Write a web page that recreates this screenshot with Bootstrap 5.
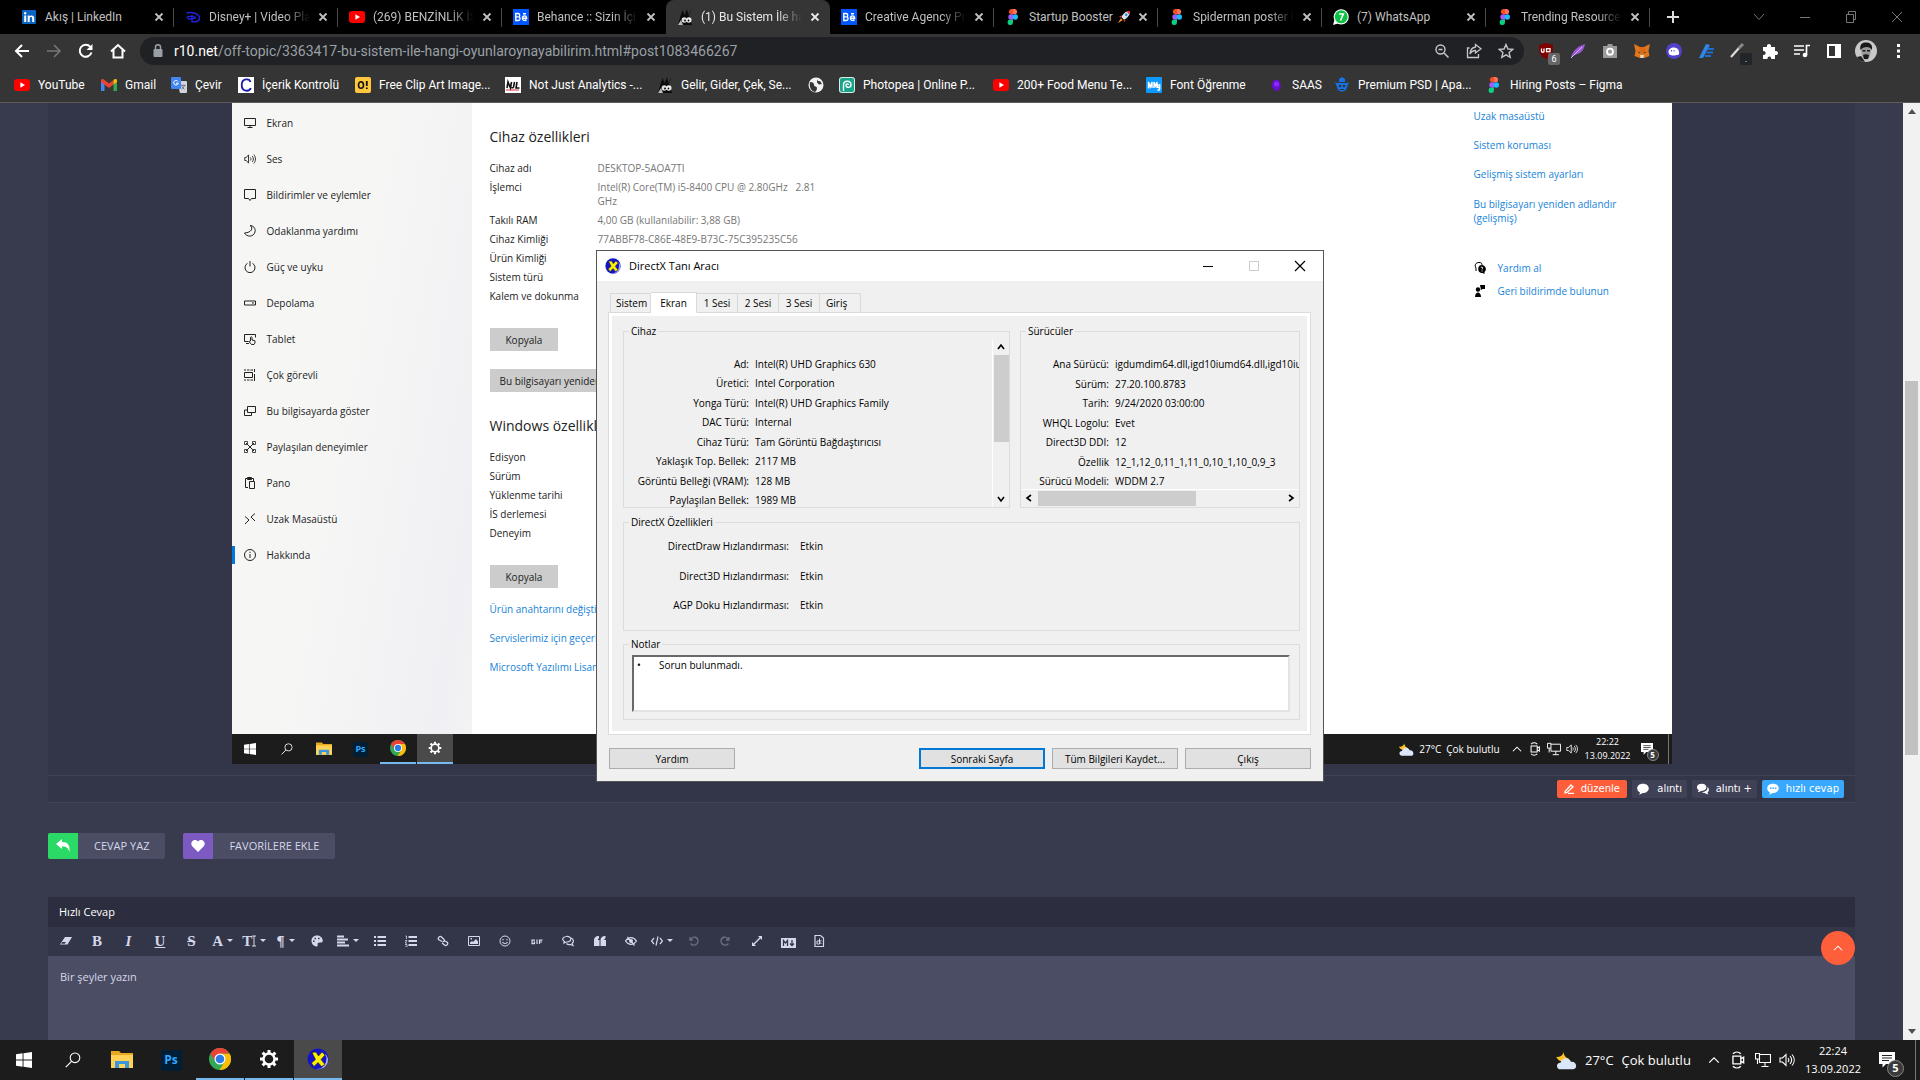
<!DOCTYPE html>
<html lang="tr">
<head>
<meta charset="utf-8">
<meta name="viewport" content="width=device-width, initial-scale=1">
<title>Bu Sistem İle hangi oyunları oynayabilirim</title>
<link rel="stylesheet" href="https://cdn.jsdelivr.net/npm/bootstrap@5.3.0/dist/css/bootstrap.min.css">
<style>
:root{--ui:"Roboto","Liberation Sans",sans-serif;--win:"Open Sans","Noto Sans",sans-serif}
body{font-family:var(--win);font-size:11px;line-height:16px;background:#383a4e;color:#fff}
button{font-family:inherit;color:inherit;background:none;border:0;padding:0}
a{color:inherit;text-decoration:none}
svg{display:block;flex:none}
.i10{width:10px;height:10px}.i12{width:12px;height:12px}.i14{width:14px;height:14px}.i16{width:16px;height:16px}.i18{width:18px;height:18px}.i20{width:20px;height:20px}
.ln{fill:none;stroke:currentColor}

/* browser chrome */
.browser{font-family:var(--ui);font-size:12px;border-bottom:1px solid #5c5c5a;background:#353535}
.tabstrip{background:#000;height:34px;padding-left:10px;color:#c0c0c0}
.btab{width:164px;padding:0 10px 0 11px;gap:8px;position:relative}
.btab::after{content:"";position:absolute;right:0;top:8px;height:19px;width:1px;background:#4a4a4a}
.btab.on{background:#353535;border-radius:8px 8px 0 0;color:#e8e8e8}
.btab.on::after,.btab.quiet::after{display:none}
.btab a{flex:1;min-width:0;overflow:hidden;white-space:nowrap}
.btab a.fades{-webkit-mask-image:linear-gradient(90deg,#000 75%,transparent);mask-image:linear-gradient(90deg,#000 75%,transparent)}
.winbtns{color:#777}
.winbtns button{width:46px}
.toolrow{height:34px;padding:0 6px;color:#fff}
.toolrow>.tb{width:32px}
.omni{height:28px;background:#202124;border-radius:14px;flex:1;font-size:14px;margin:0 6px;padding:0 2px 0 10px;color:#9aa0a6}
.omni input{background:none;border:0;outline:0;color:transparent;width:1px;padding:0}
.omni .tb{width:32px;color:#c4c7c9}
.omni b{font-weight:400;color:#fff}
.extnum{position:absolute;left:18px;top:10px;width:12px;height:12px;border-radius:2px;background:#666;font-size:9px;line-height:12px;text-align:center}
.marks{height:34px;padding:0 14px;display:grid;grid-template-columns:87px 70px 67px 117px 150px 152px 151px 31px 154px 153px 122px 66px 152px 160px;align-items:center}
.marks a{display:flex;gap:8px;align-items:center;white-space:nowrap}

/* forum page */
.desk{min-height:0}
.page{flex:1;min-width:0;padding:0 48px;overflow:hidden}
.panelbox{background:#333549;border-bottom:1px solid #404259}
.postfoot{height:27px;border-top:1px solid #404259;padding:0 11px;gap:5px;margin-top:11px}
.pbtn{height:18px;border-radius:2px;background:#3f4157;font:10px/18px "DejaVu Sans",sans-serif;padding:0 5px;display:flex;align-items:center;justify-content:space-between}
.pbtn.w70{width:70px;padding:0 7px}.pbtn.w55{width:55px}.pbtn.w65{width:65px}.pbtn.w82{width:82px}
.orange{background:#ff5e3a}.sky{background:#38a9ff}
.acts{margin:30px 0 38px;gap:18px}
.act{height:26px;display:flex;align-items:center;background:#4b4d64;border-radius:2px;overflow:hidden;color:#d5d7ea;padding:0 16px 0 0;gap:16px}
.act span{width:30px;height:26px;color:#fff;display:flex;align-items:center;justify-content:center}
.green{background:#2bd967}.violet{background:#7c5ac2}
.edhead{background:#2c2d3e;height:30px;padding:0 11px;line-height:30px;font-size:11px;font-weight:400}
.edbar{background:#333549;height:29px;padding:0 0 2px 2px;color:#d5d7ea}
.edbar .set{width:785px;display:flex}
.edbar button{flex:1 1 0;display:flex;align-items:center;justify-content:center;font:700 15px/20px "Liberation Serif",serif}
.edbar .caret{border:3px solid transparent;border-top-color:currentColor;border-bottom:0;margin-left:4px}
.edbar .off{color:#6b6d84}
.reply{background:#4b4d64;border:0;width:100%;padding:13px 12px;color:#d5d7ea;resize:none;outline:0;display:block;height:130px;overflow:hidden}
.reply::placeholder{color:#d5d7ea;opacity:1}
.totop{position:absolute;right:65px;bottom:115px;width:34px;height:34px;border-radius:50%;background:#ff5e3a;display:flex;align-items:center;justify-content:center}
.vbar{width:17px;background:#f1f1f1;padding:6px 2px;display:flex;flex-direction:column;align-items:center}
.vbar i{display:block;background:#c1c1c1;width:13px;flex:370 1 0}
.vbar .before{flex:265 1 0}.vbar .after{flex:272 1 0}
.up,.down{width:0;height:0;border:4px solid transparent}
.up{border-top:0;border-bottom:5px solid #505050}.down{border-bottom:0;border-top:5px solid #505050}

/* posted desktop capture */
.shot{width:1440px;max-width:100%;margin:0 auto;font-size:10px;line-height:14px;background:#fff;color:#222}
.shotbody{height:631px}
.side{width:240px;background:linear-gradient(100deg,#f6f6f5 45%,#f0f0f4 90%,#f3f3f4);padding-top:2px}
.side a{height:36px;display:flex;align-items:center;gap:11px;padding-left:9px;border-left:3px solid transparent;position:relative}
.side a.cur::before{content:"";position:absolute;left:-3px;top:9px;width:3px;height:18px;background:#0078d7}
.info{padding:24px 18px 0;width:300px}
.info h2{font-size:14px;line-height:20px;font-weight:400;margin:0;white-space:nowrap}
.specs{display:grid;grid-template-columns:108px 1fr;row-gap:5px;margin:0 0 25px;padding-top:14px}
.specs dt{font-weight:400;white-space:nowrap}.specs dd{margin:0;color:#767676;white-space:pre}
.gbtn{background:#ccc;height:23px;padding:0 16px;display:block;white-space:nowrap;color:#222}
.gbtn.copy{margin-bottom:18px}
.gbtn.wide{padding:0 10px}
.lnk{color:#1683d8}
.info .lnk{display:block;height:29px;white-space:nowrap}
.info .links{margin-top:-4px}
.related{width:198px;padding-top:6px}
.related>a{display:block;margin-bottom:15px}
.related>a.last{margin:0 0 36px;padding-top:1px}
.related .withico{display:flex;align-items:center;gap:12px;margin-bottom:9px;height:14px}

/* taskbars */
.tbar{background:#1c1c1c;color:#fff;display:flex;justify-content:space-between;flex-shrink:0}
.apps{display:flex;gap:1px}
.apps button{display:flex;align-items:center;justify-content:center;border-bottom:0 solid #76b9ed}
.apps .lit{background:#4a4a4a}
.pslogo{background:#001e36;color:#31a8ff;border-radius:3px;font-weight:700;text-align:center}
.tray{display:flex;align-items:center}
.clock{text-align:center}
.noti{position:relative}
.noti b{position:absolute;border-radius:50%;background:#3a3a3a;border:1px solid #888;text-align:center}
.edge{border-left:1px solid #777;align-self:stretch}
.small-t{height:30px;font-size:10px}
.small-t .apps button{width:36px}
.small-t .run{border-bottom-width:2px}
.small-t .pslogo{width:15px;height:15px;font-size:9px;line-height:14px}
.small-t .tray{gap:5px}
.small-t .sky-txt{margin-right:6px}
.small-t .clock{font-size:9px;line-height:14px;margin:0 5px 0 2px}
.small-t .noti b{width:12px;height:12px;left:6px;top:6px;font-size:8px;line-height:10px}
.small-t .edge{width:4px;margin-left:10px}
.big-t{height:40px;font-size:13px}
.big-t .apps button{width:48px}
.big-t .run{border-bottom-width:2px}
.big-t .pslogo{width:21px;height:21px;font-size:12px;line-height:20px}
.big-t .tray{gap:8px}
.big-t .sky-txt{margin-right:8px}
.big-t .clock{font-size:11px;line-height:18px;margin:0 10px 0 2px}
.big-t .noti b{width:17px;height:17px;left:8px;top:8px;font-size:11px;line-height:14px}
.big-t .edge{width:5px;margin-left:12px}

/* DirectX window */
.dx{position:absolute;left:596px;top:250px;width:728px;background:#f0f0f0;border:1px solid #555;color:#000;font-size:10px}
.dxtitle{height:30px;background:#fff;font-size:11px;padding-left:8px;display:flex;align-items:center}
.dxtitle button{width:46px;height:30px;display:flex;justify-content:center;align-items:center}
.dxbody{padding:11px 12px 12px 11px}
.dxtabs{display:flex;align-items:flex-end;height:21px;margin:0 0 -1px 2px;position:relative}
.dxtabs button{height:20px;border:1px solid #d9d9d9;border-left-width:0;padding:0 6px;width:41px;white-space:nowrap}
.dxtabs button:first-child{border-left-width:1px;padding:0 5px}
.dxtabs button.on{background:#fff;height:21px;width:46px;border-bottom-color:#fff}
.dxpane{border:1px solid #dcdcdc;outline:3px solid #fff;outline-offset:-4px;padding:10px 10px 14px 14px}
.dx fieldset{border:1px solid #dcdcdc;min-width:0;margin:0;padding:0}
.dx legend{float:none;width:auto;font-size:10px;line-height:16px;margin:0 0 0 5px;padding:0 2px}
.kv{display:flex;flex-direction:column;justify-content:space-between;margin:0}
.kv div{display:flex;gap:6px;white-space:nowrap;line-height:16px}
.kv dt{font-weight:400;text-align:right;flex:none}.kv dd{margin:0}
.gA{width:387px}.gB{flex:1}
.gA .view{height:168px;display:flex;overflow:hidden}
.gA .kv{height:169px;padding-top:17px;flex:1}.gA dt{width:125px}
.gB .kv{height:150px;padding-top:17px;overflow:hidden}.gB dt{width:88px}
.sbv{width:17px;display:flex;flex-direction:column;align-items:center;border-left:1px solid #fff;padding:4px 0}
.sbv i{background:#cdcdcd;width:15px;height:87px;margin:4px 0 auto}
.sbh{height:17px;display:flex;align-items:center;border-top:1px solid #fff;padding:0 4px}
.sbh i{background:#cdcdcd;height:15px;width:158px;margin:0 auto 0 5px}
.dx .gC{height:117px;margin:6px 0 5px}
.gC .kv{height:75px;margin-top:8px}.gC dt{width:165px}.gC .kv div{gap:11px}
.gD{height:84px}
.notes{display:block;width:658px;height:57px;margin:3px 0 0 8px;border:2px solid;border-color:#696969 #e3e3e3 #e3e3e3 #696969;background:#fff;resize:none;padding:0 3px;font-size:10px;line-height:16px;overflow:hidden;outline:0;color:#000}
.dxfoot{display:flex;gap:7px;margin:13px 0 0 1px}
.dxfoot button{width:126px;height:21px;background:#e1e1e1;border:1px solid #adadad}
.dxfoot .def{border:2px solid #0078d7}
</style>
<script src="https://cdn.jsdelivr.net/npm/bootstrap@5.3.0/dist/js/bootstrap.bundle.min.js"></script>
</head>
<body class="d-flex flex-column vh-100 overflow-hidden position-relative">
<svg width="0" height="0" class="position-absolute" aria-hidden="true"><defs>
<symbol id="x" viewBox="0 0 10 10"><path d="M1.5 1.5l7 7m0-7l-7 7" stroke="currentColor" stroke-width="1.8" fill="none"/></symbol>
<symbol id="yt" viewBox="0 0 16 16"><rect y="2" width="16" height="12" rx="3" fill="red"/><path d="M6.4 5.3v5.4L11 8z" fill="#fff"/></symbol>
<symbol id="li" viewBox="0 0 16 16"><rect x="1" y="1" width="14" height="14" rx="1" fill="#0a66c2"/><path d="M3.200 6.500h2v6.500h-2zM4.200 3a1.200 1.200 0 110 2.400 1.200 1.200 0 010-2.400zM6.700 6.500h1.900v.9c.9-1.500 4.600-1.600 4.600 1.600v4h-2V9.500c0-2-2.500-1.800-2.500 0V13h-2z" fill="#fff"/></symbol>
<symbol id="dis" viewBox="0 0 16 16"><path d="M1.500 4C7 2.500 14 4.500 14.500 9c.2 3.600-5 4.500-8 3.500M7 6v7.500M1.500 8.500c2-1.800 8-1.300 9 0-.5 1.300-6 2-8 .8" fill="none" stroke="#2222e0" stroke-width="1.400"/></symbol>
<symbol id="be" viewBox="0 0 16 16"><rect width="16" height="16" fill="#0057ff"/><path d="M2.800 4.500v7h2.400c2.400 0 2.400-3.300.4-3.600C7.300 7.500 7 4.500 5 4.500zM2.800 7.900h2.500M13.500 10.500c-1.200 1.700-4.200 1.200-4.100-1.400.2-3 4.200-3 4.200.2H9.500M10 4.800h3" stroke="#fff" stroke-width="1.400" fill="none"/></symbol>
<symbol id="r10" viewBox="0 0 16 16"><path d="M3.500 7L5.500 1l2 5 2.500-5.500 2 6.500 3 9H1z" fill="#0b0b0b"/><path d="M7.500 6l2.500-5.500M12 6l2-5" stroke="#222" fill="none"/><circle cx="7.300" cy="11" r="2.700" fill="#ddd"/><circle cx="11.800" cy="11" r="2.700" fill="#eee"/><circle cx="8" cy="11.500" r=".9"/><circle cx="11.500" cy="11.500" r=".9"/><path d="M1 16l3-5 2 5z" fill="#bbb"/></symbol>
<symbol id="fig" viewBox="0 0 16 16"><path d="M8 0H6a2.700 2.700 0 000 5.300h2z" fill="#f24e1e"/><path d="M8 0h2a2.700 2.700 0 010 5.300H8z" fill="#ff7262"/><path d="M8 5.300H6a2.700 2.700 0 000 5.400h2z" fill="#a259ff"/><circle cx="10.300" cy="8" r="2.700" fill="#1abcfe"/><path d="M8 10.700H6A2.700 2.700 0 108 13.300z" fill="#0acf83"/></symbol>
<symbol id="wa" viewBox="0 0 16 16"><circle cx="8.200" cy="7.800" r="7.600" fill="#fff"/><path d="M0 16l1.500-5L5 14.500z" fill="#fff"/><circle cx="8.200" cy="7.800" r="6.500" fill="#0dc143"/><path d="M6 5h4.300L7.500 11.500" stroke="#fff" stroke-width="1.600" fill="none"/></symbol>
<symbol id="rocket" viewBox="0 0 16 16"><path d="M15 1c-5 0-8 3-10 7l3 3c4-2 7-5 7-10z" fill="#d9e4ee"/><path d="M15 1c-2 0-3 .3-4 .9L14 5c.7-1 1-2 1-4zM5 6L2 8l3 .5zM10 11l-2 3-.5-3z" fill="#d33"/><circle cx="10.500" cy="5.500" r="1.500" fill="#2b8fd6"/><path d="M4.500 9.500L1 15l5.500-3.500z" fill="#ff9c1a"/></symbol>
<symbol id="gm" viewBox="0 0 16 16"><path d="M0 3.500V14h3.500V6.500z" fill="#4285f4"/><path d="M16 3.500V14h-3.500V6.500z" fill="#34a853"/><path d="M0 3.500C0 2 2 1.500 3.500 3L8 6.500 12.500 3v4.500L8 11 0 5z" fill="#ea4335"/><path d="M12.500 3C14 1.500 16 2 16 3.500V5l-3.500 2.500z" fill="#fbbc04"/></symbol>
<symbol id="tr" viewBox="0 0 16 16"><path d="M6 4h9a1 1 0 011 1v10a1 1 0 01-1 1H9z" fill="#d0d4da"/><rect width="10" height="12" rx="1" fill="#4285f4"/><path d="M7 4.500a2.300 2.300 0 10.300 1.700H5" stroke="#fff" fill="none"/><path d="M10 8.300h4.500m-1 0c-.6 2-2 3-3 4m.3-3c.6 1.300 1.700 2.300 2.700 3" stroke="#667" fill="none" stroke-width=".9"/></symbol>
<symbol id="ic" viewBox="0 0 16 16"><rect width="16" height="16" fill="#fff"/><path d="M12.500 5C11.500 1.200 3.700 1 3.700 8s7.800 7 9 3" fill="none" stroke="#1a1aa6" stroke-width="1.800"/></symbol>
<symbol id="oi" viewBox="0 0 16 16"><rect width="16" height="16" rx="2" fill="#ffc83d"/><ellipse cx="6" cy="8" rx="2.500" ry="3.300" fill="none" stroke="#111" stroke-width="1.600"/><path d="M11.800 4v5m0 1.500v1.500" stroke="#111" stroke-width="1.800"/></symbol>
<symbol id="njl" viewBox="0 0 16 16"><rect width="16" height="16" fill="#fff"/><path d="M2 11l1-6 2.500 6 1-6M9.500 5l-1 5c-.3 1-1.500 1-1.700.3M12 5l-1 6h3.500" stroke="#111" stroke-width="1.600" fill="none"/><path d="M1 13h13" stroke="#d33"/></symbol>
<symbol id="globe" viewBox="0 0 16 16"><circle cx="8" cy="8" r="7.500" fill="#f2f2f2"/><path d="M2 5c3 0 4 1 4 3s3 1 3 3-1 3-2 4c-4-1-6-5-5-10zM9 1.500c0 2 1 3 3 2.500l2 3-3 .5-2-2z" fill="#353535"/></symbol>
<symbol id="pp" viewBox="0 0 16 16"><rect width="16" height="16" rx="3" fill="#d9efe9"/><rect x="1" y="1" width="14" height="14" rx="2" fill="#18a487"/><path d="M4.500 14V8c0-5 7.500-5 7.500-.5 0 4-5 3.500-5 .8 0-1.800 2.500-1.800 2.500-.2" fill="none" stroke="#fff" stroke-width="1.400"/></symbol>
<symbol id="mm" viewBox="0 0 16 16"><rect width="16" height="16" rx="1" fill="#0d99ff"/><path d="M2.500 11.500V5l1.700 5L6 5v6M8 11V5l1.500 4L11 5v6M12 7v3c0 1 1.700 1 1.700 0V7v5c0 1.500-1.700 1.500-2 .5" stroke="#fff" stroke-width="1.400" fill="none"/></symbol>
<symbol id="saas" viewBox="0 0 16 16"><path d="M4.500 6c0-4.500 7.500-4.500 7.500 0l1 4-1.500 1v2.500H5.500V11L3.500 10z" fill="#6a0fd0"/><circle cx="8.500" cy="7" r="2.500" fill="#8a2bff"/></symbol>
<symbol id="prem" viewBox="0 0 16 16"><path d="M3 6h10l2-1-2 5c-1 6-9 6-10 0L1 5zM5 2l3-2 3 2v3H5z" fill="#1673e6"/><circle cx="6" cy="9" r="1.300" fill="#353535"/><circle cx="10" cy="9" r="1.300" fill="#353535"/><path d="M6 12.500h4" stroke="#353535"/></symbol>
<symbol id="chev" viewBox="0 0 16 16"><path d="M2.500 11L8 5.500l5.500 5.500" class="ln" stroke-width="1.400"/></symbol>
<symbol id="win" viewBox="0 0 16 16"><path d="M0 2.200L6.600 1.300v6.200H0zM7.500 1.200L16 0v7.500H7.500zM0 8.400h6.600v6.300L0 13.800zM7.500 8.400H16V16l-8.500-1.200z" fill="#fff"/></symbol>
<symbol id="srch" viewBox="0 0 16 16"><circle cx="10" cy="5.800" r="4.800" class="ln" stroke-width="1.100"/><path d="M6.500 9.400L.8 15.200" class="ln" stroke-width="1.200"/></symbol>
<symbol id="fold" viewBox="0 0 22 20"><path d="M0 1h8l2 2h12v15H0z" fill="#e8a91e"/><path d="M0 5h22v13H0z" fill="#ffd257"/><path d="M4 18v-7h14v7h-4v-4H8v4z" fill="#3a96dd"/></symbol>
<symbol id="chr" viewBox="0 0 22 22"><circle cx="11" cy="11" r="11" fill="#34a853"/><path d="M20.500 5.500A11 11 0 0110.500 22l5-8.500L11 5.500z" fill="#fbbc04"/><path d="M1.500 5.500A11 11 0 0110.500 22l5-8.500H6z" fill="#34a853"/><path d="M1.500 5.500a11 11 0 0119 0H11L6 13z" fill="#ea4335"/><circle cx="11" cy="11" r="5.500" fill="#fff"/><circle cx="11" cy="11" r="4.300" fill="#2a7de9"/></symbol>
<symbol id="gear" viewBox="0 0 20 20"><circle cx="10" cy="10" r="5.500" fill="none" stroke="#fff" stroke-width="2.400"/><path d="M10 1v3M10 16v3M1 10h3M16 10h3M3.600 3.600l2.200 2.200M14.200 14.200l2.200 2.200M3.600 16.400l2.200-2.200M14.200 5.800l2.200-2.200" stroke="#fff" stroke-width="3"/></symbol>
<symbol id="dxi" viewBox="0 0 22 22"><circle cx="11" cy="11" r="10.500" fill="#1515c8"/><path d="M18 6a10 10 0 01-9 15c5 1 12-2 12-9 0-2-1-5-3-6z" fill="#a9b4f0"/><path d="M5 4.500l4-.5 2.500 4L15 4l3 3-4 4.500 4 5-3.500 2-3.500-4L7 18.500 4.500 15l4-3.500z" fill="#fff000" stroke="#222" stroke-width=".6"/></symbol>
<symbol id="wx" viewBox="0 0 20 20"><path d="M8 1c-1 3 1 7 5 8-3 4-10 3-12-2 3 1 7-1 7-6z" fill="#ffc328"/><path d="M5 18.500c-4 0-4.500-6 0-6 1-5 8-5.500 9.500-.8 5.500-.7 6.500 6.800 1.500 6.800z" fill="#dbe6f8"/></symbol>
<symbol id="cam" viewBox="0 0 16 16"><path d="M3.500 4.500h7v7h-7zM10.500 7L13 5.500v5L10.500 9M3.500 2.500c2-2 5-2 7 0M3.500 13.500c2 2 5 2 7 0" class="ln" stroke-width="1.200"/></symbol>
<symbol id="mon" viewBox="0 0 16 16"><path d="M4.500 2.500h11v8h-11V7M10 10.500V14m-3.500.5h7M.5 1.500h4V7h-4zM2.500 7v5" class="ln" stroke-width="1.100"/></symbol>
<symbol id="vol" viewBox="0 0 16 16"><path d="M1 6v4h2.500L7 13.500v-11L3.500 6zM9 6c1 1.200 1 2.800 0 4M11 4c2 2.400 2 5.600 0 8M13 2.500c3 3.300 3 7.700 0 11" class="ln" stroke-width="1.100"/></symbol>
<symbol id="note" viewBox="0 0 16 16"><path d="M0 0h16v12H7l-3.500 3.500V12H0z" fill="#fff"/><path d="M3 3.500h10M3 6h10M3 8.500h7" stroke="#222"/></symbol>
<symbol id="bub" viewBox="0 0 16 16"><path d="M8 1C-1.500 1-1.500 10.500 4 12.500 4 14 3 15 1.500 15.500c2.500 0 4-1 5-2C18.500 14 18.500 1 8 1z" fill="currentColor"/></symbol>
</defs></svg>

<header class="browser flex-shrink-0">
 <nav class="tabstrip d-flex align-items-stretch" aria-label="Sekmeler">
  <div class="btab d-flex align-items-center"><svg class="i16"><use href="#li"/></svg><a href="#">Akış | LinkedIn</a><button aria-label="Kapat"><svg class="i10"><use href="#x"/></svg></button></div>
  <div class="btab d-flex align-items-center"><svg class="i16"><use href="#dis"/></svg><a href="#" class="fades">Disney+ | Video Pla</a><button aria-label="Kapat"><svg class="i10"><use href="#x"/></svg></button></div>
  <div class="btab d-flex align-items-center"><svg class="i16"><use href="#yt"/></svg><a href="#" class="fades">(269) BENZİNLİK İŞ</a><button aria-label="Kapat"><svg class="i10"><use href="#x"/></svg></button></div>
  <div class="btab quiet d-flex align-items-center"><svg class="i16"><use href="#be"/></svg><a href="#" class="fades">Behance :: Sizin İçi</a><button aria-label="Kapat"><svg class="i10"><use href="#x"/></svg></button></div>
  <div class="btab on d-flex align-items-center"><svg class="i16"><use href="#r10"/></svg><a href="#" class="fades">(1) Bu Sistem İle ha</a><button aria-label="Kapat"><svg class="i10"><use href="#x"/></svg></button></div>
  <div class="btab d-flex align-items-center"><svg class="i16"><use href="#be"/></svg><a href="#" class="fades">Creative Agency Pr</a><button aria-label="Kapat"><svg class="i10"><use href="#x"/></svg></button></div>
  <div class="btab d-flex align-items-center"><svg class="i16"><use href="#fig"/></svg><a href="#" class="d-flex align-items-center gap-1">Startup Booster <svg class="i14"><use href="#rocket"/></svg></a><button aria-label="Kapat"><svg class="i10"><use href="#x"/></svg></button></div>
  <div class="btab d-flex align-items-center"><svg class="i16"><use href="#fig"/></svg><a href="#" class="fades">Spiderman poster i</a><button aria-label="Kapat"><svg class="i10"><use href="#x"/></svg></button></div>
  <div class="btab d-flex align-items-center"><svg class="i16"><use href="#wa"/></svg><a href="#">(7) WhatsApp</a><button aria-label="Kapat"><svg class="i10"><use href="#x"/></svg></button></div>
  <div class="btab d-flex align-items-center"><svg class="i16"><use href="#fig"/></svg><a href="#" class="fades">Trending Resource</a><button aria-label="Kapat"><svg class="i10"><use href="#x"/></svg></button></div>
  <button class="px-3" aria-label="Yeni sekme"><svg class="i14" viewBox="0 0 14 14"><path d="M7 1v12M1 7h12" stroke="#ddd" stroke-width="2"/></svg></button>
  <div class="winbtns d-flex ms-auto">
   <button aria-label="Sekme ara"><svg class="i12 mx-auto" viewBox="0 0 12 12"><path d="M1 3l5 5.500L11 3" class="ln"/></svg></button>
   <button aria-label="Küçült"><svg class="i12 mx-auto" viewBox="0 0 12 12"><path d="M1 6.500h10" class="ln"/></svg></button>
   <button aria-label="Geri yükle"><svg class="i12 mx-auto" viewBox="0 0 12 12"><path d="M1.500 3.500h7v8h-7zM3.500 3.500v-3h7v8h-2" class="ln"/></svg></button>
   <button aria-label="Pencereyi kapat"><svg class="i12 mx-auto" viewBox="0 0 12 12"><path d="M1 1l10 10M11 1L1 11" class="ln"/></svg></button>
  </div>
 </nav>
 <div class="toolrow d-flex align-items-center">
  <button class="tb d-flex justify-content-center" aria-label="Geri"><svg class="i16" viewBox="0 0 16 16"><path d="M15 8H2.500M8 2L2 8l6 6" class="ln" stroke-width="2"/></svg></button>
  <button class="tb d-flex justify-content-center" aria-label="İleri"><svg class="i16" viewBox="0 0 16 16"><path d="M1 8h12.500M8 2l6 6-6 6" fill="none" stroke="#777" stroke-width="1.500"/></svg></button>
  <button class="tb d-flex justify-content-center" aria-label="Yenile"><svg class="i16" viewBox="0 0 16 16"><path d="M13.500 9.500a6 6 0 11-1.200-5.700" class="ln" stroke-width="2"/><path d="M14.500 1v6h-6z" fill="#fff"/></svg></button>
  <button class="tb d-flex justify-content-center" aria-label="Ana sayfa"><svg class="i16" viewBox="0 0 16 16"><path d="M1 8.500L8 2l7 6.500M3.500 7v7.500h9V7" class="ln" stroke-width="2"/></svg></button>
  <form class="omni d-flex align-items-center">
   <svg class="i16 me-2" viewBox="0 0 16 16"><rect x="3.500" y="6" width="9" height="8" rx="1" fill="currentColor"/><path d="M5.500 6V4c0-3 5-3 5 0v2" class="ln" stroke-width="1.500"/></svg>
   <label for="addr"><b>r10.net</b>/off-topic/3363417-bu-sistem-ile-hangi-oyunlaroynayabilirim.html#post1083466267</label><input id="addr" class="me-auto">
   <button type="button" class="tb d-flex justify-content-center" aria-label="Yakınlaştır"><svg class="i14" viewBox="0 0 14 14"><circle cx="5.500" cy="5.500" r="4.500" class="ln" stroke-width="1.400"/><path d="M9 9l4.500 4.500M3.500 5.500h4" class="ln" stroke-width="1.500"/></svg></button>
   <button type="button" class="tb d-flex justify-content-center" aria-label="Paylaş"><svg class="i16" viewBox="0 0 16 16"><path d="M3.500 5h-2v9.500h11V11M9.500 1.500L15 5.800 9.500 10V7.500C7 7.500 5.500 8.500 4 11c.3-4 2.500-6.500 5.500-7z" class="ln" stroke-width="1.300"/></svg></button>
   <button type="button" class="tb d-flex justify-content-center" aria-label="Yer işareti"><svg class="i16" viewBox="0 0 16 16"><path d="M8 1.500l2 4.500 4.700.4-3.600 3.200 1.100 4.700L8 11.800l-4.200 2.500 1.100-4.700L1.300 6.400 6 6z" class="ln" stroke-width="1.400"/></svg></button>
  </form>
  <button class="tb position-relative" aria-label="uBlock"><svg class="i16 mx-auto" viewBox="0 0 16 16"><path d="M8 0l7 2c0 6 0 11-7 14C1 13 1 8 1 2z" fill="#800000"/><path d="M3.500 5.500v3c0 1 2.500 1 2.500 0v-3" fill="none" stroke="#fff" stroke-width="1.300"/><rect x="8.500" y="5.700" width="3.500" height="3" fill="none" stroke="#fff" stroke-width="1.300"/></svg><span class="extnum">6</span></button>
  <button class="tb" aria-label="Tüy"><svg class="i16 mx-auto" viewBox="0 0 16 16"><path d="M1 15C2 8 8 3 15 1c-1 7-5 10-11 11z" fill="#9b59d6"/><path d="M1 15L12 4" stroke="#d9b8f5"/></svg></button>
  <button class="tb" aria-label="Kamera"><svg class="i16 mx-auto" viewBox="0 0 16 16"><path d="M1 3h4l1-2h4l1 2h4v12H1z" fill="#9a9a9a"/><circle cx="8" cy="8.700" r="3" fill="none" stroke="#fff" stroke-width="1.800"/></svg></button>
  <button class="tb" aria-label="MetaMask"><svg class="i16 mx-auto" viewBox="0 0 16 16"><path d="M0 1l6 3h4l6-3-1.500 7 1 5-4 1.500L9.500 15h-3l-2-.5L.5 13l1-5z" fill="#e2761b"/><path d="M6 12h4l-.5 3h-3z" fill="#e8d8c8"/><path d="M3.500 8.500l3 1-1 1zM12.500 8.500l-3 1 1 1z" fill="#233447"/><path d="M6 4h4l1.500 5L8 11 4.500 9z" fill="#cd6116" opacity=".5"/></svg></button>
  <button class="tb" aria-label="Hayalet"><svg class="i16 mx-auto" viewBox="0 0 16 16"><circle cx="8" cy="8" r="8" fill="#5140c9"/><path d="M2.500 9c0-6 10-6 10.500-.5.300 2.500 0 4-2 3.500-5 1-8 1-8.500-3z" fill="#fff"/><path d="M5.500 7v1.500M8 7v1.500" stroke="#5140c9"/></svg></button>
  <button class="tb" aria-label="Kalem"><svg class="i16 mx-auto" viewBox="0 0 16 16"><path d="M1 15L8 1l4 1-7 13z" fill="#2f86e8"/><path d="M10 6h6M8.500 9.500H15M7 13h6" stroke="#1d6fd6" stroke-width="2"/></svg></button>
  <button class="tb position-relative" aria-label="Damlalık"><svg class="i16 mx-auto" viewBox="0 0 16 16"><path d="M1 14L9 5" stroke="#ddd" stroke-width="2.200"/><path d="M8.500 5.500L13 1" stroke="#888" stroke-width="3"/></svg><span class="extnum bg-dark">.</span></button>
  <button class="tb" aria-label="Uzantılar"><svg class="i16 mx-auto" viewBox="0 0 16 16"><path d="M1 4h4c-1-4 5-4 4 0h4v4c4-1 4 5 0 4v4H9c1-3.500-4-3.500-3.500 0H1v-4c3.500.5 3.500-4.500 0-4z" fill="#fff"/></svg></button>
  <button class="tb" aria-label="Medya"><svg class="i16 mx-auto" viewBox="0 0 16 16"><path d="M0 3h10M0 7h10M0 11h6M12.500 12V2.500H16" class="ln" stroke-width="1.700"/><circle cx="11" cy="12" r="2.300" fill="#fff"/></svg></button>
  <button class="tb" aria-label="Yan panel"><svg class="i14 mx-auto" viewBox="0 0 14 14"><path d="M0 0h14v14H0zM2 2v10h6V2z" fill="#fff" fill-rule="evenodd"/></svg></button>
  <button class="tb" aria-label="Profil"><svg class="mx-auto" width="22" height="22" viewBox="0 0 22 22"><circle cx="11" cy="11" r="11" fill="#c9c9c9"/><path d="M6 9c0-7 9-7 10 0l-1 7c-2 5-6 5-8 0z" fill="#9a9a9a"/><path d="M5.500 10C4 3 9 2 12 2.500c5 .5 6 5 4.500 7.500-1-4-8-4-11 0zM8 15c2-1 4-1 6 0l-1 4H9zM7.500 10h3v1.500h-3zM12 10h3v1.500h-3z" fill="#1a1a1a"/><path d="M2 17l4-1 4 5.800c-4 0-6.500-2-8-4.800z" fill="#222"/></svg></button>
  <button class="tb" aria-label="Menü"><svg class="i16 mx-auto" viewBox="0 0 16 16"><path d="M7 1h3v3H7zM7 6.500h3v3H7zM7 12h3v3H7z" fill="#fff"/></svg></button>
 </div>
 <nav class="marks" aria-label="Yer işaretleri">
  <a href="#"><svg class="i16"><use href="#yt"/></svg>YouTube</a>
  <a href="#"><svg class="i16"><use href="#gm"/></svg>Gmail</a>
  <a href="#"><svg class="i16"><use href="#tr"/></svg>Çevir</a>
  <a href="#"><svg class="i16"><use href="#ic"/></svg>İçerik Kontrolü</a>
  <a href="#"><svg class="i16"><use href="#oi"/></svg>Free Clip Art Image...</a>
  <a href="#"><svg class="i16"><use href="#njl"/></svg>Not Just Analytics -...</a>
  <a href="#"><svg class="i16"><use href="#r10"/></svg>Gelir, Gider, Çek, Se...</a>
  <a href="#" aria-label="Site"><svg class="i16"><use href="#globe"/></svg></a>
  <a href="#"><svg class="i16"><use href="#pp"/></svg>Photopea | Online P...</a>
  <a href="#"><svg class="i16"><use href="#yt"/></svg>200+ Food Menu Te...</a>
  <a href="#"><svg class="i16"><use href="#mm"/></svg>Font Öğrenme</a>
  <a href="#"><svg class="i16"><use href="#saas"/></svg>SAAS</a>
  <a href="#"><svg class="i16"><use href="#prem"/></svg>Premium PSD | Apa...</a>
  <a href="#"><svg class="i16"><use href="#fig"/></svg>Hiring Posts – Figma</a>
 </nav>
</header>

<main class="desk d-flex flex-grow-1 overflow-hidden">
 <div class="page">
  <article class="panelbox">
   <div class="shot">
    <div class="shotbody d-flex">
     <nav class="side" aria-label="Ayarlar">
      <a href="#"><svg class="i12" viewBox="0 0 12 12"><path d="M.5 1.500h11v7H.5zM6 8.500v2M3.500 10.500h5" class="ln"/></svg>Ekran</a>
      <a href="#"><svg class="i12" viewBox="0 0 16 16"><path d="M1 6v4h2l3 3.500v-11L3 6zM8.500 6c1 1.200 1 2.800 0 4M11 4c2 2.400 2 5.600 0 8M13 2c3 3.300 3 8.700 0 12" class="ln" stroke-width="1.200"/></svg>Ses</a>
      <a href="#"><svg class="i12" viewBox="0 0 12 12"><path d="M.5.5h11v9H7.500L6 11.500 4.500 9.500h-4z" class="ln"/></svg>Bildirimler ve eylemler</a>
      <a href="#"><svg class="i12" viewBox="0 0 12 12"><path d="M6 .5c3 1 3 7-5.500 7.500 2 4 9 4.500 10.500-1C12 3 9 .5 6 .5z" class="ln"/></svg>Odaklanma yardımı</a>
      <a href="#"><svg class="i12" viewBox="0 0 12 12"><path d="M3.500 2.300a5 5 0 105 0M6 0v5.500" class="ln"/></svg>Güç ve uyku</a>
      <a href="#"><svg class="i12" viewBox="0 0 12 12"><path d="M.5 4h11v4H.5zM8 6h2" class="ln"/></svg>Depolama</a>
      <a href="#"><svg class="i12" viewBox="0 0 12 12"><path d="M4.500 8.500h-4v-7h11v3M6.500 8V4.500c0-1 1.500-1 1.500 0V7l3 .8v2l-1 1.700H7.500L5 8.500zM2 10.500h3" class="ln"/></svg>Tablet</a>
      <a href="#"><svg class="i12" viewBox="0 0 12 12"><path d="M.5 3.500h8v5h-8zM0 1h2M3 1h2.500M6.500 1H9M0 11h2M3 11h2.500M6.500 11H9M10.500 0v3M10.500 5v7" class="ln"/></svg>Çok görevli</a>
      <a href="#"><svg class="i12" viewBox="0 0 12 12"><path d="M3.500 1.500h8v6h-8zM3.500 5h-3v5.500h7v-3" class="ln"/></svg>Bu bilgisayarda göster</a>
      <a href="#"><svg class="i12" viewBox="0 0 12 12"><path d="M2 2l8 8M10 2l-8 8" class="ln"/><path d="M.5.500h3v3h-3zM8.500.500h3v3h-3zM.5 8.500h3v3h-3zM8.500 8.500h3v3h-3z" class="ln" stroke-width=".8"/></svg>Paylaşılan deneyimler</a>
      <a href="#"><svg class="i12" viewBox="0 0 12 12"><path d="M4 10.500H1.500v-9h8V4M3.500.5h4v2h-4zM5.500 4.500h5v7h-5z" class="ln"/></svg>Pano</a>
      <a href="#"><svg class="i12" viewBox="0 0 12 12"><path d="M1 3.500L5 7l-4 4M11 .5L7 4l4 4" class="ln"/></svg>Uzak Masaüstü</a>
      <a href="#" class="cur"><svg class="i12" viewBox="0 0 12 12"><circle cx="6" cy="6" r="5.500" class="ln"/><path d="M6 5v4M6 2.800v1.200" class="ln"/></svg>Hakkında</a>
     </nav>
     <section class="info">
      <h2>Cihaz özellikleri</h2>
      <dl class="specs">
       <dt>Cihaz adı</dt><dd>DESKTOP-5AOA7TI</dd>
       <dt>İşlemci</dt><dd>Intel(R) Core(TM) i5-8400 CPU @ 2.80GHz   2.81
GHz</dd>
       <dt>Takılı RAM</dt><dd>4,00 GB (kullanılabilir: 3,88 GB)</dd>
       <dt>Cihaz Kimliği</dt><dd>77ABBF78-C86E-48E9-B73C-75C395235C56</dd>
       <dt>Ürün Kimliği</dt><dd></dd>
       <dt>Sistem türü</dt><dd></dd>
       <dt>Kalem ve dokunma</dt><dd></dd>
      </dl>
      <button class="gbtn copy">Kopyala</button>
      <button class="gbtn wide">Bu bilgisayarı yeniden</button>
      <h2 class="mt-4">Windows özellikleri</h2>
      <dl class="specs">
       <dt>Edisyon</dt><dd></dd><dt>Sürüm</dt><dd></dd><dt>Yüklenme tarihi</dt><dd></dd><dt>İS derlemesi</dt><dd></dd><dt>Deneyim</dt><dd></dd>
      </dl>
      <button class="gbtn copy">Kopyala</button>
      <div class="links">
      <a class="lnk" href="#">Ürün anahtarını değiştirin</a>
      <a class="lnk" href="#">Servislerimiz için geçerli</a>
      <a class="lnk" href="#">Microsoft Yazılımı Lisans</a>
      </div>
     </section>
     <aside class="related lnk ms-auto">
      <a href="#">Uzak masaüstü</a>
      <a href="#">Sistem koruması</a>
      <a href="#">Gelişmiş sistem ayarları</a>
      <a href="#" class="last">Bu bilgisayarı yeniden adlandır<br>(gelişmiş)</a>
      <a href="#" class="withico"><svg class="i12 text-black" viewBox="0 0 12 12"><path d="M2 9V6C0 3 2 .5 5 .5S8 2 8 3" class="ln"/><path d="M8 3a4 4 0 012.500 7v2L8.500 11A4 4 0 118 3z" fill="#000"/><path d="M7 6c0-1.500 2.500-1 1.500.5L8 7.500m0 1v1" stroke="#fff" fill="none"/></svg>Yardım al</a>
      <a href="#" class="withico"><svg class="i12" viewBox="0 0 12 12"><path d="M6 0h5v4H8.500L7 5z"/><circle cx="4" cy="4.500" r="2.200"/><path d="M1 12c0-6 6-6 6 0z"/></svg>Geri bildirimde bulunun</a>
     </aside>
    </div>
    <div class="tbar small-t">
     <div class="apps">
      <button aria-label="Başlat"><svg class="i12"><use href="#win"/></svg></button>
      <button aria-label="Ara"><svg class="i12"><use href="#srch"/></svg></button>
      <button aria-label="Dosyalar"><svg class="i16"><use href="#fold"/></svg></button>
      <button aria-label="Photoshop"><span class="pslogo">Ps</span></button>
      <button aria-label="Chrome" class="run"><svg class="i16"><use href="#chr"/></svg></button>
      <button aria-label="Ayarlar" class="run lit"><svg class="i14"><use href="#gear"/></svg></button>
     </div>
     <div class="tray">
      <svg class="i16"><use href="#wx"/></svg><span>27°C</span><span class="sky-txt">Çok bulutlu</span>
      <svg class="i12"><use href="#chev"/></svg><svg class="i14"><use href="#cam"/></svg><svg class="i14"><use href="#mon"/></svg><svg class="i12"><use href="#vol"/></svg>
      <div class="clock">22:22<br>13.09.2022</div>
      <div class="noti"><svg class="i12"><use href="#note"/></svg><b>5</b></div><span class="edge"></span>
     </div>
    </div>
   </div>
   <div class="postfoot d-flex align-items-center justify-content-end">
    <button class="pbtn w70 orange"><svg class="i10" viewBox="0 0 10 10"><path d="M1 7.500L7 1l2 2-6 5.500L1 9zM4 9.500h6" class="ln" stroke-width="1.300"/></svg>düzenle</button>
    <button class="pbtn w55"><svg class="i12"><use href="#bub"/></svg>alıntı</button>
    <button class="pbtn w65"><svg class="i12" viewBox="0 0 16 16"><path d="M6.500 1C-1.500 1-1.500 8 2.500 9.500L1 12c2 0 3-.5 4-1.500C15 11 14.500 1 6.500 1z" fill="currentColor"/><path d="M14 5c3 3 2 6 0 7.500 0 1 .7 2 1.500 2.500-2 0-3.500-.5-4.500-1.500-2 0-3.500-.5-4.500-1.500 5 0 8-3 7.500-7z" fill="currentColor"/></svg>alıntı +</button>
    <button class="pbtn w82 sky"><svg class="i12" viewBox="0 0 16 16"><use href="#bub"/><path d="M4 6h2v2H4zM7.300 6h2v2h-2zM10.600 6h2v2h-2z" fill="#38a9ff"/></svg>hızlı cevap</button>
   </div>
  </article>
  <div class="acts d-flex">
   <button class="act"><span class="green"><svg class="i14" viewBox="0 0 14 14"><path d="M0 5l6-5v3c6 0 8 3 7.500 10C12 9 11 7.500 6 7.500V10z" fill="#fff"/></svg></span>CEVAP YAZ</button>
   <button class="act"><span class="violet"><svg class="i14" viewBox="0 0 14 14"><path d="M7 13L1 7C-1.500 3.500 3-1.500 7 2.500 11-1.500 15.500 3.500 13 7z" fill="#fff"/></svg></span>FAVORİLERE EKLE</button>
  </div>
  <section>
   <h3 class="edhead m-0"><label for="reply">Hızlı Cevap</label></h3>
   <div class="edbar d-flex"><div class="set">
    <button aria-label="Temizle"><svg class="i12" viewBox="0 0 12 12"><path d="M5 2h7L7.500 9.500H0z" fill="currentColor"/><path d="M2.300 7L6 7l-1.300 1.800H1.200z" fill="#333549"/></svg></button>
    <button>B</button><button class="fst-italic">I</button><button class="text-decoration-underline">U</button><button class="text-decoration-line-through">S</button>
    <button>A<span class="caret"></span></button><button>T<svg width="4" height="12" viewBox="0 0 4 12"><path d="M2 1v10M0 1h4M0 11h4" class="ln"/></svg><span class="caret"></span></button><button>¶<span class="caret"></span></button>
    <button aria-label="Renk"><svg class="i12" viewBox="0 0 12 12"><path d="M6 .5C-1.500.5-1 11 5.500 11.500c2 0 .5-2.500 1.500-3.500s5 .5 4.800-2.500C11.500 2.500 9 .5 6 .5z" fill="currentColor"/><path d="M2 5.500h1.500V7H2zM3.500 2.800H5v1.500H3.500zM7 2.800h1.500v1.500H7z" fill="#333549"/></svg></button>
    <button aria-label="Hizala"><svg class="i12" viewBox="0 0 12 12"><path d="M0 1.500h7M0 4.500h11M0 7.500h8M0 10.500h12" class="ln" stroke-width="1.800"/></svg><span class="caret"></span></button>
    <button aria-label="Liste"><svg class="i12" viewBox="0 0 12 12"><path d="M0 2h2M0 6h2M0 10h2M3.500 2H12M3.500 6H12M3.500 10H12" class="ln" stroke-width="2"/></svg></button>
    <button aria-label="Numaralı liste"><svg class="i12" viewBox="0 0 12 12"><path d="M3.500 2H12M3.500 6H12M3.500 10H12" class="ln" stroke-width="2"/><path d="M.5 1h1v3M0 5.500h2L0 8h2M0 9.500h2v2.500H0" class="ln" stroke-width=".8"/></svg></button>
    <button aria-label="Bağlantı"><svg class="i12" viewBox="0 0 12 12"><path d="M5 6.500L1.500 4.500c-1-2 1.500-4 3-2.500L7 4.500c1 1.500-.5 2.500-1.500 2M7 5.500l3.500 2c1 2-1.500 4-3 2.500L5 8" class="ln" stroke-width="1.300"/></svg></button>
    <button aria-label="Resim"><svg class="i12" viewBox="0 0 12 12"><path d="M.5 1.500h11v9H.5z" class="ln"/><path d="M2 9V7.500L4 6l1 1 3-3 2 2.500V9zM2.500 3H4v1.500H2.500z" fill="currentColor"/></svg></button>
    <button aria-label="İfade"><svg class="i12" viewBox="0 0 12 12"><circle cx="6" cy="6" r="5" class="ln"/><path d="M3.500 7c1 2 4 2 5 0M4 4v1.300M8 4v1.300" class="ln" stroke-width="1.200"/></svg></button>
    <button aria-label="GIF"><svg class="i12" viewBox="0 0 12 12"><path d="M4 5.200H1v3.500h2.500V7H2.500M6 4.500V9M8.500 9V5.200h3M8.500 7H11" class="ln" stroke-width="1.200"/></svg></button>
    <button aria-label="Yorum"><svg class="i12" viewBox="0 0 12 12"><path d="M4.500 1.500c6-.5 5.500 5.500 0 5.500L2 8l.5-1.500C-.5 5 .5 1.700 4.500 1.500zM9 3c3 1 3 4 1 5.500l1 2-2.500-1c-1.500.3-3 0-4-1" class="ln" stroke-width="1.200"/></svg></button>
    <button aria-label="Alıntı"><svg class="i12" viewBox="0 0 12 12"><path d="M0 6c0-3.500 1.500-5 5-5v2L3.500 5H5.500v6H0zM6.500 6c0-3.500 1.500-5 5-5v2L10 5h2v6H6.500z" fill="currentColor"/></svg></button>
    <button aria-label="Gizle"><svg class="i12" viewBox="0 0 12 12"><path d="M.5 6c3-4.500 8-4.500 11 0-3 4.500-8 4.500-11 0zM2.500 2l7 8.500" class="ln" stroke-width="1.200"/><circle cx="6" cy="6" r="2" fill="currentColor"/></svg></button>
    <button aria-label="Kod"><svg class="i12" viewBox="0 0 12 12"><path d="M3 3L.5 6 3 9M9 3l2.500 3L9 9M7 1.500l-2 9" class="ln" stroke-width="1.200"/></svg><span class="caret"></span></button>
    <button aria-label="Geri al" class="off"><svg class="i10" viewBox="0 0 10 10"><path d="M1 1v3h3M1.500 3.500C4-.5 9 1 9 5s-5 5.500-7.500 2.500" class="ln" stroke-width="1.300"/></svg></button>
    <button aria-label="Yinele" class="off"><svg class="i10" viewBox="0 0 10 10"><path d="M9 1v3H6M8.500 3.500C6-.5 1 1 1 5s5 5.500 7.500 2.500" class="ln" stroke-width="1.300"/></svg></button>
    <button aria-label="Tam ekran"><svg class="i10" viewBox="0 0 10 10"><path d="M6 0h4v4zM0 6v4h4z" fill="currentColor"/><path d="M1.500 8.500l7-7" class="ln" stroke-width="1.500"/></svg></button>
    <button aria-label="Markdown"><svg class="mt-1" width="15" height="10" viewBox="0 0 15 10"><path d="M0 0h15v10H0z" fill="currentColor"/><path d="M2.500 8V2.500L4.500 5l2-2.500V8M11 2v5M9 5.500l2 2 2-2" stroke="#333549" stroke-width="1.300" fill="none"/></svg></button>
    <button aria-label="Word"><svg class="i12" viewBox="0 0 12 12"><path d="M2 .5h5.500L10.500 3v8.500H2z" class="ln" stroke-width="1.200"/><path d="M6.500 3.500v5.500H4V6h2.500M8.500 5L6.500 7l2 2" class="ln"/></svg></button>
   </div></div>
   <textarea id="reply" class="reply" placeholder="Bir şeyler yazın"></textarea>
  </section>
 </div>
 <div class="vbar" aria-hidden="true"><span class="up"></span><span class="before"></span><i></i><span class="after"></span><span class="down"></span></div>
</main>

<footer class="tbar big-t">
 <div class="apps">
  <button aria-label="Başlat"><svg class="i16"><use href="#win"/></svg></button>
  <button aria-label="Ara"><svg class="i16"><use href="#srch"/></svg></button>
  <button aria-label="Dosyalar"><svg width="22" height="20"><use href="#fold"/></svg></button>
  <button aria-label="Photoshop"><span class="pslogo">Ps</span></button>
  <button aria-label="Chrome" class="run"><svg width="22" height="22"><use href="#chr"/></svg></button>
  <button aria-label="Ayarlar" class="run"><svg class="i20"><use href="#gear"/></svg></button>
  <button aria-label="DirectX" class="run lit"><svg width="22" height="22"><use href="#dxi"/></svg></button>
 </div>
 <div class="tray">
  <svg width="22" height="22"><use href="#wx"/></svg><span>27°C</span><span class="sky-txt">Çok bulutlu</span>
  <svg class="i14"><use href="#chev"/></svg><svg class="i18"><use href="#cam"/></svg><svg class="i16"><use href="#mon"/></svg><svg class="i16"><use href="#vol"/></svg>
  <div class="clock">22:24<br>13.09.2022</div>
  <div class="noti"><svg class="i16"><use href="#note"/></svg><b>5</b></div><span class="edge"></span>
 </div>
</footer>

<button class="totop" aria-label="Yukarı çık"><svg class="i12"><use href="#chev"/></svg></button>

<section class="dx" role="dialog" aria-label="DirectX Tanı Aracı">
 <header class="dxtitle"><svg class="i16 me-1"><use href="#dxi"/></svg><span class="ms-1 me-auto">DirectX Tanı Aracı</span>
  <button aria-label="Küçült"><svg class="i12" viewBox="0 0 12 12"><path d="M1 6.500h10" class="ln"/></svg></button>
  <button aria-label="Ekranı kapla" disabled><svg class="i12" viewBox="0 0 12 12"><path d="M1.500 1.500h9v9h-9z" fill="none" stroke="#ccc"/></svg></button>
  <button aria-label="Kapat"><svg class="i12" viewBox="0 0 12 12"><path d="M1 1l10 10M11 1L1 11" class="ln" stroke-width="1.200"/></svg></button>
 </header>
 <div class="dxbody">
  <div class="dxtabs" role="tablist"><button>Sistem</button><button class="on">Ekran</button><button>1 Sesi</button><button>2 Sesi</button><button>3 Sesi</button><button class="text-start">Giriş</button></div>
  <div class="dxpane">
   <div class="d-flex" style="gap:10px">
    <fieldset class="gA"><legend>Cihaz</legend>
     <div class="view"><dl class="kv">
      <div><dt>Ad:</dt><dd>Intel(R) UHD Graphics 630</dd></div>
      <div><dt>Üretici:</dt><dd>Intel Corporation</dd></div>
      <div><dt>Yonga Türü:</dt><dd>Intel(R) UHD Graphics Family</dd></div>
      <div><dt>DAC Türü:</dt><dd>Internal</dd></div>
      <div><dt>Cihaz Türü:</dt><dd>Tam Görüntü Bağdaştırıcısı</dd></div>
      <div><dt>Yaklaşık Top. Bellek:</dt><dd>2117 MB</dd></div>
      <div><dt>Görüntü Belleği (VRAM):</dt><dd>128 MB</dd></div>
      <div><dt>Paylaşılan Bellek:</dt><dd>1989 MB</dd></div>
     </dl>
     <div class="sbv"><svg width="8" height="8" viewBox="0 0 8 8"><path d="M1 6l3-4 3 4" class="ln" stroke-width="1.600"/></svg><i></i><svg width="8" height="8" viewBox="0 0 8 8"><path d="M1 2l3 4 3-4" class="ln" stroke-width="1.600"/></svg></div></div>
    </fieldset>
    <fieldset class="gB"><legend>Sürücüler</legend>
     <dl class="kv">
      <div><dt>Ana Sürücü:</dt><dd>igdumdim64.dll,igd10iumd64.dll,igd10iu</dd></div>
      <div><dt>Sürüm:</dt><dd>27.20.100.8783</dd></div>
      <div><dt>Tarih:</dt><dd>9/24/2020 03:00:00</dd></div>
      <div><dt>WHQL Logolu:</dt><dd>Evet</dd></div>
      <div><dt>Direct3D DDI:</dt><dd>12</dd></div>
      <div><dt>Özellik</dt><dd>12_1,12_0,11_1,11_0,10_1,10_0,9_3</dd></div>
      <div><dt>Sürücü Modeli:</dt><dd>WDDM 2.7</dd></div>
     </dl>
     <div class="sbh"><svg width="8" height="8" viewBox="0 0 8 8"><path d="M6 1L2 4l4 3" class="ln" stroke-width="1.600"/></svg><i></i><svg width="8" height="8" viewBox="0 0 8 8"><path d="M2 1l4 3-4 3" class="ln" stroke-width="1.600"/></svg></div>
    </fieldset>
   </div>
   <fieldset class="gC"><legend>DirectX Özellikleri</legend>
    <dl class="kv"><div><dt>DirectDraw Hızlandırması:</dt><dd>Etkin</dd></div><div><dt>Direct3D Hızlandırması:</dt><dd>Etkin</dd></div><div><dt>AGP Doku Hızlandırması:</dt><dd>Etkin</dd></div></dl>
   </fieldset>
   <fieldset class="gD"><legend><label for="notes">Notlar</label></legend>
    <textarea id="notes" class="notes" readonly>•       Sorun bulunmadı.</textarea>
   </fieldset>
  </div>
  <div class="dxfoot"><button class="me-auto">Yardım</button><button class="def">Sonraki Sayfa</button><button>Tüm Bilgileri Kaydet...</button><button>Çıkış</button></div>
 </div>
</section>
</body>
</html>
